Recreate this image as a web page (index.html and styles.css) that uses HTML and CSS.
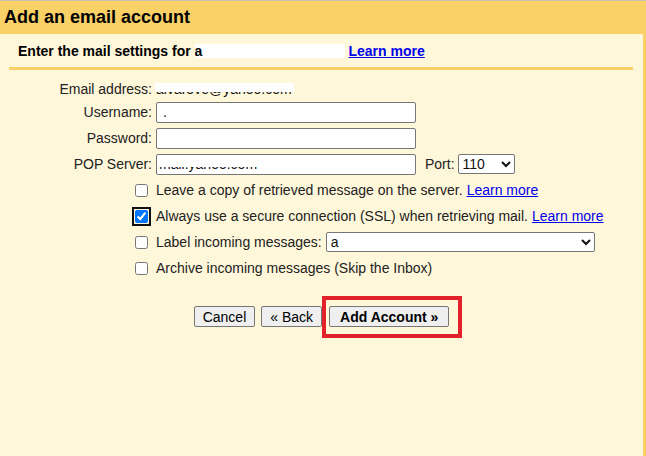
FILE: index.html
```html
<!DOCTYPE html>
<html lang="en">
<head>
  <meta charset="UTF-8">
  <title>Add an email account</title>
  <link rel="stylesheet" href="styles.css">
</head>
<body>
  <div class="dialog">
    <div class="dialog-title">Add an email account</div>

    <div class="dialog-body">
      <div class="intro">
        Enter the mail settings for <span class="hidden-box">a</span> <a href="#">Learn more</a>
      </div>

      <form class="fields" onsubmit="return false">
        <div class="lbl">Email address:</div>
        <div class="val"><span class="masked">alvarove@yahoo.com</span></div>

        <label class="lbl" for="user">Username:</label>
        <div class="val"><input type="text" id="user" class="text-in" value=" ."></div>

        <label class="lbl" for="pass">Password:</label>
        <div class="val"><input type="password" id="pass" class="text-in"></div>

        <label class="lbl" for="pop">POP Server:</label>
        <div class="val">
          <span class="masked-input"><input type="text" id="pop" class="text-in" value="mail.yahoo.com"></span>
          <label class="port-lbl" for="port">Port:</label>
          <select id="port" class="port">
            <option>110</option>
            <option>995</option>
          </select>
        </div>

        <div class="box"><input type="checkbox" id="leave"></div>
        <div class="val"><label for="leave">Leave a copy of retrieved message on the server.</label> <a href="#">Learn more</a></div>

        <div class="box"><input type="checkbox" id="ssl" class="focused" checked></div>
        <div class="val"><label for="ssl">Always use a secure connection (SSL) when retrieving mail.</label> <a href="#">Learn more</a></div>

        <div class="box"><input type="checkbox" id="tag"></div>
        <div class="val">
          <label for="tag">Label incoming messages:</label>
          <select class="tag-select"><option>a</option></select>
        </div>

        <div class="box"><input type="checkbox" id="archive"></div>
        <div class="val"><label for="archive">Archive incoming messages (Skip the Inbox)</label></div>
      </form>

      <div class="actions">
        <button type="button">Cancel</button>
        <button type="button">&laquo; Back</button>
        <button type="button" class="primary">Add Account &raquo;</button>
      </div>
    </div>
  </div>
</body>
</html>
```

FILE: styles.css
```css
html, body {
  height: 100%;
}

body {
  margin: 0;
  background-color: #f9d167; /* amarelo do cabeçalho */
  font-family: 'Liberation Sans', Arial, sans-serif;
  font-size: 14px;
  color: #222;
}

.dialog {
  height: 100%;
  display: flex;
  flex-direction: column;
  border-top: 1px solid #c9c1ad;
  box-sizing: border-box;
}

.dialog-title {
  height: 33px;
  line-height: 33px;
  padding-left: 4px;
  font-size: 18px;
  font-weight: bold;
  color: #000;
}

.dialog-body {
  flex: 1;
  background-color: #fff7da;
  margin-right: 3px;
}

.intro {
  margin: 0 10px 0 9px;
  padding: 9px 0 8px 9px;
  line-height: 16px;
  font-weight: bold;
  color: #000;
  border-bottom: 3px solid #f9d167;
}

.hidden-box {
  display: inline-block;
  width: 150px;
  height: 14px;
  line-height: 14px;
  vertical-align: -2px;
  background: #fff;
  overflow: hidden;
}

a {
  color: #0000ee;
  text-decoration: underline;
}

/* formulário */
.fields {
  display: grid;
  grid-template-columns: 152px 1fr;
  grid-template-rows: 20px;
  grid-auto-rows: 26px;
  column-gap: 4px;
  align-items: center;
  margin: 0;
  padding-top: 9px;
}

.lbl {
  text-align: right;
}

.val {
  display: flex;
  align-items: center;
  white-space: nowrap;
}

.val a {
  margin-left: 4px;
}

.masked {
  position: relative;
  color: #111;
}

.masked::after {
  content: "";
  position: absolute;
  left: -1px;
  right: -2px;
  top: 2px;
  height: 9px;
  background: #fff;
}

.text-in {
  width: 260px;
  height: 21px;
  box-sizing: border-box;
  margin: 0;
  padding: 1px 2px;
  border: 1px solid #767676;
  border-radius: 2px;
  background: #fff;
  font-family: inherit;
  font-size: 14px;
  color: #111;
}

.masked-input {
  position: relative;
  display: inline-flex;
}

.masked-input::after {
  content: "";
  position: absolute;
  left: 3px;
  top: 2px;
  width: 106px;
  height: 11px;
  background: #fff;
}

.port-lbl {
  margin: 0 3px 0 9px;
}

select {
  height: 20px;
  box-sizing: border-box;
  margin: 0;
  border: 1px solid #767676;
  border-radius: 2px;
  background: #fff;
  font-family: inherit;
  font-size: 14px;
  color: #111;
}

.port {
  width: 57px;
}

.tag-select {
  width: 269px;
  margin-left: 4px;
}

.box {
  display: flex;
  justify-content: flex-end;
}

.box input {
  width: 13px;
  height: 13px;
  margin: 0 4px 0 0;
}

.box input.focused {
  outline: 2px solid #101010;
  outline-offset: 1px;
  border-radius: 2px;
}

/* botões */
.actions {
  display: flex;
  justify-content: center;
  gap: 6px;
  margin-top: 25px;
}

.actions button {
  height: 21px;
  padding: 0 8px;
  border: 1px solid #767676;
  border-radius: 2px;
  background: #efefef;
  font-family: inherit;
  font-size: 14px;
  color: #000;
}

.actions .primary {
  position: relative;
  padding: 0 10px;
  font-weight: bold;
  margin-left: 1px;
}

/* destaque vermelho em volta do botão */
.actions .primary::after {
  content: "";
  position: absolute;
  top: -11px;
  left: -8px;
  right: -14px;
  bottom: -12px;
  border: 4px solid #e3212b;
}
```
